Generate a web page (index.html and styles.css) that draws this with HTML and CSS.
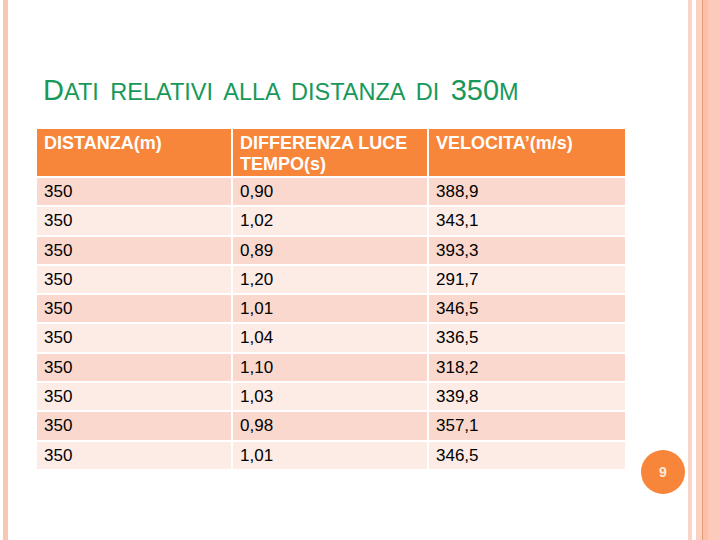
FILE: index.html
```html
<!DOCTYPE html>
<html lang="it">
<head>
<meta charset="utf-8">
<title>Dati relativi alla distanza di 350m</title>
<link rel="stylesheet" href="styles.css">
</head>
<body>
<div class="slide">
  <h1 class="title"><span class="big">D</span>ATI RELATIVI ALLA DISTANZA DI <span class="big">350</span>M</h1>
  <div class="table">
    <div class="cell head">DISTANZA(m)</div>
    <div class="cell head">DIFFERENZA LUCE TEMPO(s)</div>
    <div class="cell head">VELOCITA’(m/s)</div>

    <div class="cell odd">350</div><div class="cell odd">0,90</div><div class="cell odd">388,9</div>
    <div class="cell even">350</div><div class="cell even">1,02</div><div class="cell even">343,1</div>
    <div class="cell odd">350</div><div class="cell odd">0,89</div><div class="cell odd">393,3</div>
    <div class="cell even">350</div><div class="cell even">1,20</div><div class="cell even">291,7</div>
    <div class="cell odd">350</div><div class="cell odd">1,01</div><div class="cell odd">346,5</div>
    <div class="cell even">350</div><div class="cell even">1,04</div><div class="cell even">336,5</div>
    <div class="cell odd">350</div><div class="cell odd">1,10</div><div class="cell odd">318,2</div>
    <div class="cell even">350</div><div class="cell even">1,03</div><div class="cell even">339,8</div>
    <div class="cell odd">350</div><div class="cell odd">0,98</div><div class="cell odd">357,1</div>
    <div class="cell even">350</div><div class="cell even">1,01</div><div class="cell even">346,5</div>
  </div>
  <div class="page-num">9</div>
</div>
</body>
</html>
```
FILE: styles.css
```css
html, body {
  margin: 0;
  padding: 0;
  background: #ffffff;
}

.slide {
  position: relative;
  width: 720px;
  height: 540px;
  box-sizing: border-box;
  padding: 74px 0 0 37px;
  font-family: "Liberation Sans", Arial, sans-serif;
  background:
    linear-gradient(to right,
      #ffffff 0, #ffffff 3px,
      #f8c6b5 3px, #f8c6b5 8px,
      #ffffff 8px, #ffffff 688px,
      #f9d4c7 688px, #f9d4c7 692px,
      #ffffff 692px, #ffffff 696px,
      #fcd1c1 696px, #fcd1c1 702px,
      #e39c78 702px, #e39c78 703px,
      #fdbfa5 703px, #fdbfa5 708px,
      #fdcaba 708px, #fdcaba 720px);
}

.title {
  margin: 0 0 20px 6px;
  font-size: 23.5px;
  line-height: 33px;
  font-weight: normal;
  word-spacing: 5px;
  color: #18995a;
  white-space: nowrap;
}

.big {
  font-size: 29px;
  word-spacing: 0;
}

.table {
  display: grid;
  grid-template-columns: 194px 194px 196px;
  grid-template-rows: 47px;
  grid-auto-rows: 27.3px;
  column-gap: 2px;
  row-gap: 2px;
  width: 586px;
}

.cell {
  box-sizing: border-box;
  padding: 0 7px;
  font-size: 17px;
  line-height: 27.3px;
  color: #000000;
  white-space: nowrap;
}

.head {
  background: #f7863a;
  color: #ffffff;
  font-size: 18px;
  font-weight: bold;
  line-height: 21px;
  padding-top: 4px;
  white-space: normal;
}

.odd {
  background: #fbd8cd;
}

.even {
  background: #fdebe6;
}

.page-num {
  position: absolute;
  left: 641px;
  top: 450px;
  width: 44px;
  height: 44px;
  border-radius: 50%;
  background: #f7863a;
  color: #fdeadb;
  font-size: 14px;
  font-weight: bold;
  line-height: 44px;
  text-align: center;
}
```
